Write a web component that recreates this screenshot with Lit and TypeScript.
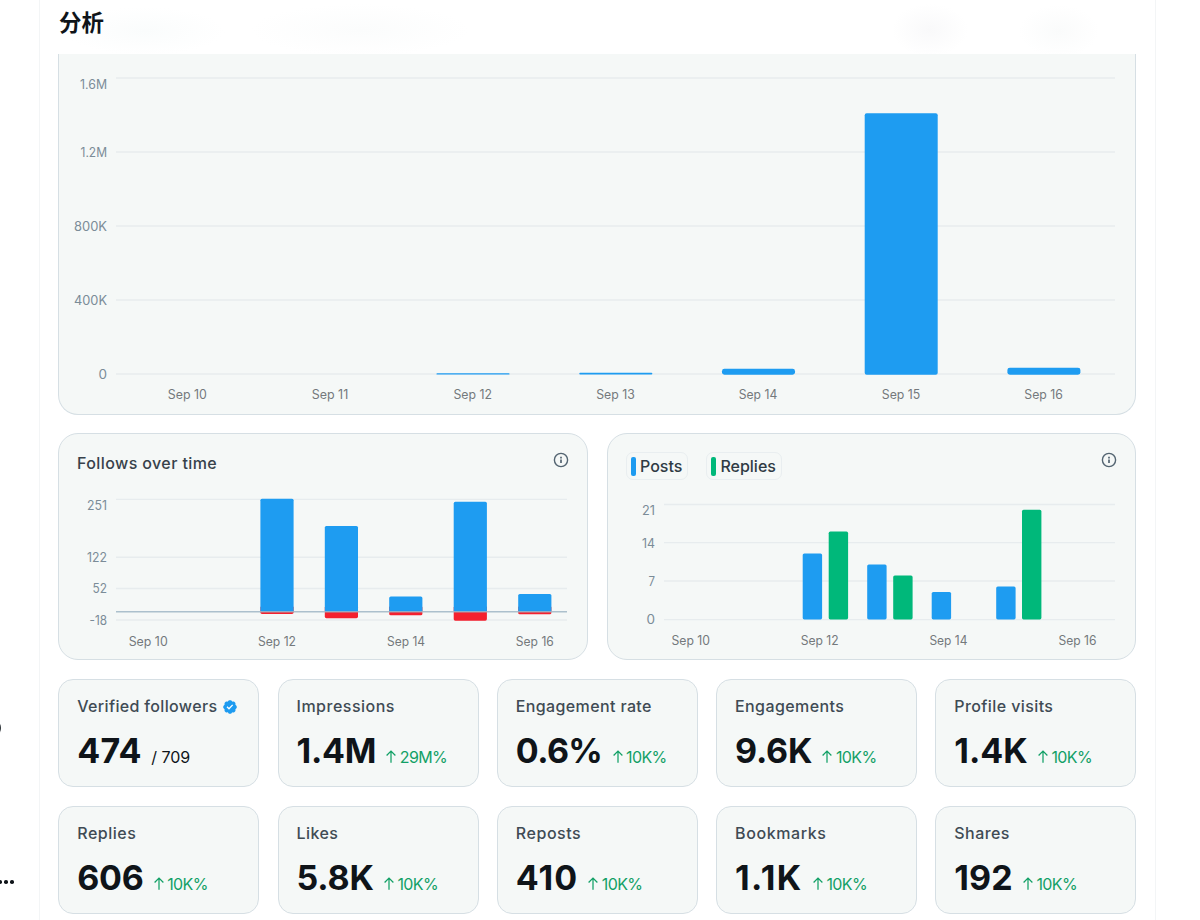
import { LitElement, html, svg, css, nothing } from "lit";
import { customElement, property } from "lit/decorators.js";

interface Bar { x: number; y: number; w: number; h: number; kind: string; r?: number; }
interface Tick { label: string; at: number; w: number; line?: number; }
interface Chart {
  box: [number, number, number, number];
  x1: number; x2: number; labelX: number;
  ticks: Tick[];
  dates: Tick[];
  dateY: number;
  bars: Bar[];
  zero?: number;
}

const BLUE = "blue", GREEN = "green", RED = "red";

const overview: Chart = {
  box: [59, 54, 1076, 360], x1: 116, x2: 1115, labelX: 107,
  ticks: [
    { label: "1.6M", at: 84, w: 27, line: 78 },
    { label: "1.2M", at: 152, w: 26.5 },
    { label: "800K", at: 226, w: 33 },
    { label: "400K", at: 300, w: 33 },
    { label: "0", at: 374, w: 8.5 },
  ],
  dates: [
    { label: "Sep 10", at: 187.3, w: 39 }, { label: "Sep 11", at: 330, w: 36.5 },
    { label: "Sep 12", at: 472.7, w: 38.5 }, { label: "Sep 13", at: 615.5, w: 38.5 },
    { label: "Sep 14", at: 758, w: 38.5 }, { label: "Sep 15", at: 901, w: 38.5 },
    { label: "Sep 16", at: 1043.6, w: 38.5 },
  ],
  dateY: 394.4,
  bars: [
    { x: 436.5, y: 373.2, w: 73, h: 1.4, kind: BLUE, r: 0.6 },
    { x: 579.3, y: 372.8, w: 73, h: 1.8, kind: BLUE, r: 0.8 },
    { x: 722, y: 368.8, w: 73, h: 5.9, kind: BLUE, r: 2.4 },
    { x: 864.7, y: 113.2, w: 73, h: 261.5, kind: BLUE, r: 2 },
    { x: 1007.4, y: 367.7, w: 73, h: 7, kind: BLUE, r: 2.4 },
  ],
};

const follows: Chart = {
  box: [59, 484, 528, 175], x1: 116, x2: 567, labelX: 107,
  ticks: [
    { label: "251", at: 505.4, w: 20, line: 499.4 },
    { label: "122", at: 557.2, w: 20 },
    { label: "52", at: 588.5, w: 14.5 },
    { label: "-18", at: 620.5, w: 17.5, line: 620 },
  ],
  dates: [
    { label: "Sep 10", at: 148.2, w: 39 }, { label: "Sep 12", at: 277, w: 38 },
    { label: "Sep 14", at: 406, w: 38 }, { label: "Sep 16", at: 534.8, w: 38 },
  ],
  dateY: 641,
  bars: [
    ...([[260.4, 498.7, 613.9], [324.8, 526, 618.2], [389.2, 596.4, 615.3], [453.7, 501.8, 620.7], [518.2, 593.9, 614.3]]
      .flatMap(([x, top, bottom]) => [
        { x, y: 606, w: 33.2, h: bottom - 606, kind: RED },
        { x, y: top, w: 33.2, h: 611.8 - top, kind: BLUE },
      ])),
  ],
  zero: 611.8,
};

const posts: Chart = {
  box: [608, 484, 527, 175], x1: 664, x2: 1115, labelX: 655,
  ticks: [
    { label: "21", at: 510.5, w: 13, line: 504.5 },
    { label: "14", at: 543.3, w: 13, line: 542.6 },
    { label: "7", at: 581, w: 6.5 },
    { label: "0", at: 619.6, w: 8.5 },
  ],
  dates: [
    { label: "Sep 10", at: 690.7, w: 38.5 }, { label: "Sep 12", at: 819.7, w: 38 },
    { label: "Sep 14", at: 948.4, w: 38 }, { label: "Sep 16", at: 1077.4, w: 38 },
  ],
  dateY: 640.3,
  bars: [
    [802.7, 553.5, BLUE], [828.7, 531.6, GREEN], [867.2, 564.5, BLUE], [893.2, 575.4, GREEN],
    [931.7, 591.9, BLUE], [996.2, 586.5, BLUE], [1022, 509.8, GREEN],
  ].map(([x, y, kind]) => ({ x: x as number, y: y as number, w: 19.4, h: 619.4 - (y as number), kind: kind as string })),
};

@customElement("bar-chart")
class BarChart extends LitElement {
  @property({ attribute: false }) chart!: Chart;

  static styles = css`
    :host { display: block; }
    svg { display: block; }
    text { font: 400 12.4px Inter, "Liberation Sans", sans-serif; }
    .grid { stroke: #e7ecee; stroke-width: 1.4; }
    .zero { stroke: #9fb6c6; stroke-opacity: 0.85; stroke-width: 1.4; }
    .tick { fill: #7b8c98; text-anchor: end; }
    .date { fill: #74797c; text-anchor: middle; }
    .blue { fill: #1e9cf1; }
    .green { fill: #00b87a; }
    .red { fill: #f4212e; }
  `;

  render() {
    const c = this.chart;
    return html`
      <svg width=${c.box[2]} height=${c.box[3]} viewBox=${c.box.join(" ")}>
        ${c.ticks.map((t) => svg`
          <line class="grid" x1=${c.x1} x2=${c.x2} y1=${t.line ?? t.at} y2=${t.line ?? t.at}></line>
          <text class="tick" x=${c.labelX} y=${t.at + 4.7} textLength=${t.w} lengthAdjust="spacingAndGlyphs">${t.label}</text>`)}
        ${c.bars.map((b) => svg`<rect class=${b.kind} x=${b.x} y=${b.y} width=${b.w} height=${b.h} rx=${b.r ?? 1.6}></rect>`)}
        ${c.zero ? svg`<line class="zero" x1=${c.x1} x2=${c.x2} y1=${c.zero} y2=${c.zero}></line>` : nothing}
        ${c.dates.map((d) => svg`
          <text class="date" x=${d.at} y=${c.dateY + 4.6} textLength=${d.w} lengthAdjust="spacingAndGlyphs">${d.label}</text>`)}
      </svg>`;
  }
}

const infoIcon = html`
  <svg class="info" width="16" height="16" viewBox="0 0 16 16" fill="none">
    <circle cx="8" cy="8" r="6.6" stroke="#536471" stroke-width="1.4"></circle>
    <path d="M8 4.7v1.7M8 7.4v3.7" stroke="#536471" stroke-width="1.7"></path>
  </svg>`;

const verifiedIcon = html`
  <svg class="verified" width="16" height="16" viewBox="0 0 22 22">
    <path fill="#1d9bf0" d="M20.396 11c-.018-.646-.215-1.275-.57-1.816-.354-.54-.852-.972-1.438-1.246.223-.607.27-1.264.14-1.897-.131-.634-.437-1.218-.882-1.687-.47-.445-1.053-.75-1.687-.882-.633-.13-1.29-.083-1.897.14-.273-.587-.704-1.086-1.245-1.44S11.647 1.62 11 1.604c-.646.017-1.273.213-1.813.568s-.969.854-1.24 1.44c-.608-.223-1.267-.272-1.902-.14-.635.13-1.22.436-1.69.882-.445.47-.749 1.055-.878 1.688-.13.633-.08 1.29.144 1.896-.587.274-1.087.705-1.443 1.245-.356.54-.555 1.17-.574 1.817.02.647.218 1.276.574 1.817.356.54.856.972 1.443 1.245-.224.606-.274 1.263-.144 1.896.13.634.433 1.218.877 1.688.47.443 1.054.747 1.687.878.633.132 1.29.084 1.897-.136.274.586.705 1.084 1.246 1.439.54.354 1.17.551 1.816.569.647-.016 1.276-.213 1.817-.567s.972-.854 1.245-1.44c.604.239 1.266.296 1.903.164.636-.132 1.22-.447 1.68-.907.46-.46.776-1.044.908-1.681s.075-1.299-.165-1.903c.586-.274 1.084-.705 1.439-1.246.354-.54.551-1.17.569-1.816z"></path>
    <path fill="#fff" d="M9.662 14.85l-3.429-3.428 1.293-1.302 2.072 2.072 4.4-4.794 1.347 1.246z"></path>
  </svg>`;

const arrowIcon = html`
  <svg class="arrow" width="10" height="13" viewBox="0 0 10 13" fill="none" stroke="#12a066" stroke-width="1.25">
    <path d="M5 12.8V1.2M.6 5.5 5 1.1l4.4 4.4"></path>
  </svg>`;

interface Stat { label: string; ls: number; value: string; vs: number; change?: string; total?: string; }

const stats: Stat[] = [
  { label: "Verified followers", ls: 0.34, value: "474", vs: 0.2, total: "/ 709" },
  { label: "Impressions", ls: 0.5, value: "1.4M", vs: -0.3, change: "29M%" },
  { label: "Engagement rate", ls: 0.37, value: "0.6%", vs: -0.6, change: "10K%" },
  { label: "Engagements", ls: 0.4, value: "9.6K", vs: -0.2, change: "10K%" },
  { label: "Profile visits", ls: 0.4, value: "1.4K", vs: 0, change: "10K%" },
  { label: "Replies", ls: 0.5, value: "606", vs: -0.3, change: "10K%" },
  { label: "Likes", ls: 0.4, value: "5.8K", vs: -0.2, change: "10K%" },
  { label: "Reposts", ls: 0.55, value: "410", vs: 1, change: "10K%" },
  { label: "Bookmarks", ls: 0.6, value: "1.1K", vs: 1.4, change: "10K%" },
  { label: "Shares", ls: 0.45, value: "192", vs: 0.1, change: "10K%" },
];

@customElement("app-root")
class AppRoot extends LitElement {
  static styles = css`
    :host {
      display: block; width: 1200px; height: 920px; overflow: hidden; position: relative;
      background: #fff; color: #0f1419; font-family: Inter, "Liberation Sans", "Noto Sans CJK SC", sans-serif;
    }
    * { box-sizing: border-box; }
    .column {
      width: 1117px; height: 920px; margin-left: 39px; padding: 0 19px 0 18px;
      border: 1px solid #f3f5f6; border-width: 0 1px;
    }
    .header {
      height: 54px; margin: 0 -19px 0 -18px; padding: 6px 19px;
      background:
        radial-gradient(ellipse 38px 26px at 890px 30px, #f9f9fa, transparent),
        radial-gradient(ellipse 40px 26px at 1019px 31px, #fafbfb, transparent),
        radial-gradient(ellipse 80px 24px at 105px 31px, #fafcfc, transparent),
        radial-gradient(ellipse 110px 26px at 320px 30px, #fbfcfc, transparent),
        #fff;
    }
    h1 { margin: 0; font: 700 22.4px/30px "Noto Sans CJK SC", sans-serif; }
    .card { background: #f5f8f7; border: 1px solid #d6dfe4; border-radius: 20px; }
    .overview { border-top: 0; border-radius: 0 0 20px 20px; height: 361px; }
    .pair { display: grid; grid-template-columns: 530px 529px; gap: 19px; margin: 18px 0 19px; }
    .panel { height: 227px; display: flex; flex-direction: column; }
    .bar { height: 50px; padding: 18px 18px 0; display: flex; align-items: flex-start; }
    .title { font-size: 16px; line-height: 22px; font-weight: 500; color: #37424b; letter-spacing: .4px; }
    .info { margin-left: auto; flex: none; margin-top: .4px; }
    .chip {
      height: 28px; border: 1px solid #e9eef0; border-radius: 7px; display: flex; align-items: center;
      gap: 4.5px; padding: 0 5px 0 4px; font-size: 16px; font-weight: 500; color: #2f3b44;
      margin: 0 18px 0 -.5px;
    }
    .swatch { width: 5px; height: 19px; border-radius: 2px; background: #1d9bf0; }
    .swatch.replies { background: #00b87a; }
    .stats { display: grid; grid-template-columns: repeat(5, 201px); gap: 19px 18.25px; padding-left: .3px; }
    .stat { height: 108px; padding: 15px 18px; border-radius: 15px; }
    .label { display: flex; align-items: center; gap: 4.5px; font-size: 16px; line-height: 22px; font-weight: 500; color: #3f4b54; white-space: nowrap; }
    .verified { margin-top: 2px; }
    .figure { display: flex; align-items: baseline; margin-top: 13px; line-height: 42px; white-space: nowrap; }
    .value { font-size: 34px; font-weight: 700; }
    .change { color: #12a066; font-size: 16px; letter-spacing: -.6px; margin-left: 10.2px; display: flex; align-items: baseline; gap: 3.5px; }
    .total { font-size: 16px; margin-left: 9.5px; }
    .aside { position: absolute; left: 0; top: 0; width: 20px; height: 920px; overflow: hidden; }
    .ring { position: absolute; left: -17px; top: 719px; width: 18px; height: 18px; border-radius: 9px; background: #2d3338; }
    .dots { position: absolute; left: -2px; top: 880px; display: flex; gap: 2.5px; }
    .dots i { width: 3.6px; height: 3.6px; border-radius: 50%; background: #0f1419; }
  `;

  render() {
    return html`
      <div class="aside"><span class="ring"></span><span class="dots"><i></i><i></i><i></i></span></div>
      <div class="column">
        <div class="header"><h1>分析</h1></div>
        <section class="card overview"><bar-chart .chart=${overview}></bar-chart></section>
        <div class="pair">
          <section class="card panel">
            <div class="bar"><span class="title">Follows over time</span>${infoIcon}</div>
            <bar-chart .chart=${follows}></bar-chart>
          </section>
          <section class="card panel">
            <div class="bar">
              <span class="chip"><span class="swatch"></span>Posts</span>
              <span class="chip"><span class="swatch replies"></span>Replies</span>
              ${infoIcon}
            </div>
            <bar-chart .chart=${posts}></bar-chart>
          </section>
        </div>
        <div class="stats">
          ${stats.map((s) => html`
            <section class="card stat">
              <div class="label"><span style="letter-spacing:${s.ls}px">${s.label}</span>${s.total ? verifiedIcon : nothing}</div>
              <div class="figure">
                <span class="value" style="letter-spacing:${s.vs}px">${s.value}</span>
                ${s.total ? html`<span class="total">${s.total}</span>` : html`<span class="change">${arrowIcon}<span>${s.change}</span></span>`}
              </div>
            </section>`)}
        </div>
      </div>`;
  }
}
